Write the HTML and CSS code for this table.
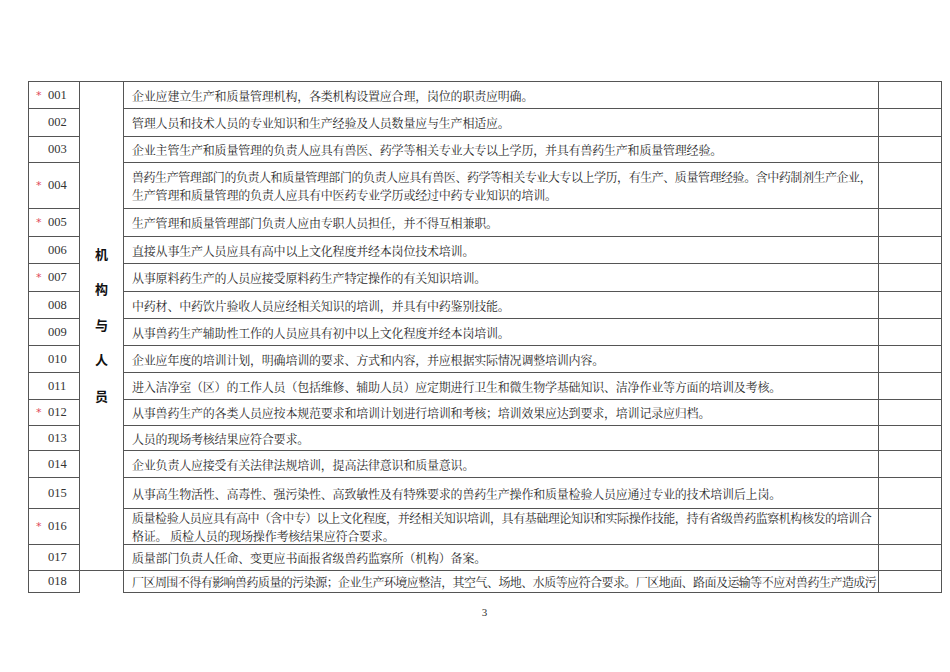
FILE: index.html
```html
<!DOCTYPE html>
<html lang="zh-CN">
<head>
<meta charset="utf-8">
<title>兽药GMP检查项目</title>
<link rel="stylesheet" href="styles.css">
</head>
<body>
<div class="page">
  <table class="grid">
    <colgroup>
      <col class="c-id"><col class="c-cat"><col class="c-text"><col class="c-res">
    </colgroup>
    <tbody>
      <tr class="h27">
        <td class="id"><span class="star">*</span>001</td>
        <td class="cat" rowspan="17"><div class="cat-chars"><span>机</span><span>构</span><span>与</span><span>人</span><span>员</span></div></td>
        <td class="txt">企业应建立生产和质量管理机构，各类机构设置应合理，岗位的职责应明确。</td>
        <td class="res"></td>
      </tr>
      <tr class="h28">
        <td class="id"><span class="star off">*</span>002</td>
        <td class="txt">管理人员和技术人员的专业知识和生产经验及人员数量应与生产相适应。</td>
        <td class="res"></td>
      </tr>
      <tr class="h26">
        <td class="id"><span class="star off">*</span>003</td>
        <td class="txt">企业主管生产和质量管理的负责人应具有兽医、药学等相关专业大专以上学历，并具有兽药生产和质量管理经验。</td>
        <td class="res"></td>
      </tr>
      <tr class="h46">
        <td class="id"><span class="star">*</span>004</td>
        <td class="txt two"><span class="tight">兽药生产管理部门的负责人和质量管理部门的负责人应具有兽医、药学等相关专业大专以上学历，有生产、质量管理经验。含中药制剂生产企业，</span><br>生产管理和质量管理的负责人应具有中医药专业学历或经过中药专业知识的培训。</td>
        <td class="res"></td>
      </tr>
      <tr class="h28">
        <td class="id"><span class="star">*</span>005</td>
        <td class="txt">生产管理和质量管理部门负责人应由专职人员担任，并不得互相兼职。</td>
        <td class="res"></td>
      </tr>
      <tr class="h27">
        <td class="id"><span class="star off">*</span>006</td>
        <td class="txt">直接从事生产人员应具有高中以上文化程度并经本岗位技术培训。</td>
        <td class="res"></td>
      </tr>
      <tr class="h28">
        <td class="id"><span class="star">*</span>007</td>
        <td class="txt">从事原料药生产的人员应接受原料药生产特定操作的有关知识培训。</td>
        <td class="res"></td>
      </tr>
      <tr class="h27">
        <td class="id"><span class="star off">*</span>008</td>
        <td class="txt">中药材、中药饮片验收人员应经相关知识的培训，并具有中药鉴别技能。</td>
        <td class="res"></td>
      </tr>
      <tr class="h27">
        <td class="id"><span class="star off">*</span>009</td>
        <td class="txt">从事兽药生产辅助性工作的人员应具有初中以上文化程度并经本岗培训。</td>
        <td class="res"></td>
      </tr>
      <tr class="h27">
        <td class="id"><span class="star off">*</span>010</td>
        <td class="txt">企业应年度的培训计划，明确培训的要求、方式和内容，并应根据实际情况调整培训内容。</td>
        <td class="res"></td>
      </tr>
      <tr class="h27">
        <td class="id"><span class="star off">*</span>011</td>
        <td class="txt">进入洁净室（区）的工作人员（包括维修、辅助人员）应定期进行卫生和微生物学基础知识、洁净作业等方面的培训及考核。</td>
        <td class="res"></td>
      </tr>
      <tr class="h26">
        <td class="id"><span class="star">*</span>012</td>
        <td class="txt">从事兽药生产的各类人员应按本规范要求和培训计划进行培训和考核；培训效果应达到要求，培训记录应归档。</td>
        <td class="res"></td>
      </tr>
      <tr class="h25">
        <td class="id"><span class="star off">*</span>013</td>
        <td class="txt">人员的现场考核结果应符合要求。</td>
        <td class="res"></td>
      </tr>
      <tr class="h27">
        <td class="id"><span class="star off">*</span>014</td>
        <td class="txt">企业负责人应接受有关法律法规培训，提高法律意识和质量意识。</td>
        <td class="res"></td>
      </tr>
      <tr class="h31">
        <td class="id"><span class="star off">*</span>015</td>
        <td class="txt">从事高生物活性、高毒性、强污染性、高致敏性及有特殊要求的兽药生产操作和质量检验人员应通过专业的技术培训后上岗。</td>
        <td class="res"></td>
      </tr>
      <tr class="h35">
        <td class="id"><span class="star">*</span>016</td>
        <td class="txt two"><span class="tight">质量检验人员应具有高中（含中专）以上文化程度，并经相关知识培训，具有基础理论知识和实际操作技能，持有省级兽药监察机构核发的培训合</span><br>格证。 质检人员的现场操作考核结果应符合要求。</td>
        <td class="res"></td>
      </tr>
      <tr class="h26">
        <td class="id"><span class="star off">*</span>017</td>
        <td class="txt">质量部门负责人任命、变更应书面报省级兽药监察所（机构）备案。</td>
        <td class="res"></td>
      </tr>
      <tr class="h22 last">
        <td class="id"><span class="star off">*</span>018</td>
        <td class="cat open"></td>
        <td class="txt"><span class="tighter">厂区周围不得有影响兽药质量的污染源；企业生产环境应整洁，其空气、场地、水质等应符合要求。厂区地面、路面及运输等不应对兽药生产造成污</span></td>
        <td class="res"></td>
      </tr>
    </tbody>
  </table>
  <div class="page-no">3</div>
</div>
</body>
</html>
```

FILE: styles.css
```css
html, body {
  margin: 0;
  padding: 0;
  background: #ffffff;
}

body {
  font-family: "Noto Serif CJK SC", "Liberation Serif", "Noto Sans CJK SC", serif;
  color: #2a2a2a;
}

.page {
  width: 950px;
  height: 672px;
  padding: 81px 0 0 28px;
  box-sizing: border-box;
}

.grid {
  border-collapse: collapse;
  table-layout: fixed;
  width: 913px;
}

.c-id { width: 51px; }
.c-cat { width: 44px; }
.c-text { width: 755px; }
.c-res { width: 63px; }

.grid td {
  border: 1px solid #555555;
  padding: 0;
  vertical-align: middle;
}

.h22 { height: 22px; }
.h25 { height: 25px; }
.h26 { height: 26px; }
.h27 { height: 27px; }
.h28 { height: 28px; }
.h31 { height: 31px; }
.h35 { height: 35px; }
.h46 { height: 46px; }

.id {
  font-family: "Liberation Serif", "Noto Serif CJK SC", serif;
  font-size: 12.5px;
  padding-left: 7px !important;
  white-space: nowrap;
  color: #333333;
}

.star {
  display: inline-block;
  width: 12px;
  color: #e0485a;
  font-family: "DejaVu Sans", sans-serif;
  font-size: 11px;
}

.star.off {
  visibility: hidden;
}

.cat {
  text-align: center;
}

.cat.open {
  border-bottom: none !important;
}

.cat-chars {
  display: flex;
  flex-direction: column;
  align-items: center;
  gap: 14.5px;
  font-family: "Noto Sans CJK SC", sans-serif;
  font-weight: 700;
  font-size: 13px;
  line-height: 21px;
  color: #111111;
  padding-bottom: 4px;
}

.txt {
  font-size: 12px;
  line-height: 17px;
  letter-spacing: -0.2px;
  padding-left: 8px !important;
  white-space: nowrap;
  overflow: hidden;
}

.txt.two {
  line-height: 17.5px;
}

.tight {
  letter-spacing: -0.45px;
}

.tighter {
  letter-spacing: -0.55px;
}

.page-no {
  width: 913px;
  text-align: center;
  margin-top: 13px;
  font-family: "Liberation Serif", serif;
  font-size: 11px;
  color: #333333;
}
```
